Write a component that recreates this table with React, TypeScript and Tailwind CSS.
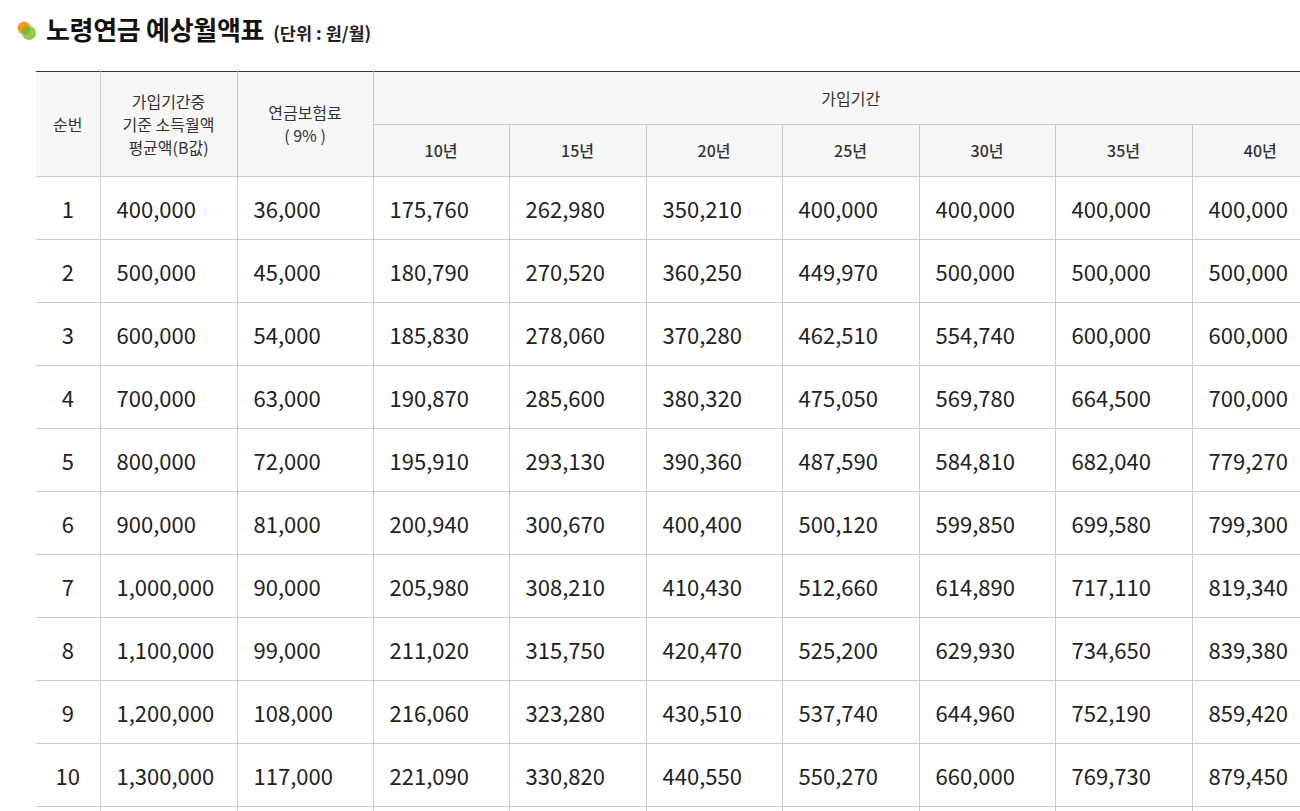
const years = ['10년', '15년', '20년', '25년', '30년', '35년', '40년'];

const rows: string[][] = [
  ['1', '400,000', '36,000', '175,760', '262,980', '350,210', '400,000', '400,000', '400,000', '400,000'],
  ['2', '500,000', '45,000', '180,790', '270,520', '360,250', '449,970', '500,000', '500,000', '500,000'],
  ['3', '600,000', '54,000', '185,830', '278,060', '370,280', '462,510', '554,740', '600,000', '600,000'],
  ['4', '700,000', '63,000', '190,870', '285,600', '380,320', '475,050', '569,780', '664,500', '700,000'],
  ['5', '800,000', '72,000', '195,910', '293,130', '390,360', '487,590', '584,810', '682,040', '779,270'],
  ['6', '900,000', '81,000', '200,940', '300,670', '400,400', '500,120', '599,850', '699,580', '799,300'],
  ['7', '1,000,000', '90,000', '205,980', '308,210', '410,430', '512,660', '614,890', '717,110', '819,340'],
  ['8', '1,100,000', '99,000', '211,020', '315,750', '420,470', '525,200', '629,930', '734,650', '839,380'],
  ['9', '1,200,000', '108,000', '216,060', '323,280', '430,510', '537,740', '644,960', '752,190', '859,420'],
  ['10', '1,300,000', '117,000', '221,090', '330,820', '440,550', '550,270', '660,000', '769,730', '879,450'],
];

const colWidths = ['w-[64px]', 'w-[137px]', 'w-[136px]', 'w-[136px]', 'w-[137px]', 'w-[136px]', 'w-[137px]', 'w-[136px]', 'w-[137px]', 'w-[136px]'];

function TitleIcon() {
  return (
    <svg width="22" height="22" viewBox="0 0 22 22" className="shrink-0">
      <circle cx="8" cy="8" r="6.5" fill="#f39c12" />
      <circle cx="13" cy="13" r="7" fill="#8cc63f" opacity="0.92" />
      <circle cx="10.2" cy="10.4" r="4" fill="#6aa82a" opacity="0.5" />
    </svg>
  );
}

export default function App() {
  return (
    <div
      className="h-[811px] w-[1300px] overflow-hidden bg-white text-[#222]"
      style={{ fontFamily: '"Noto Sans CJK KR", "Noto Sans", sans-serif' }}
    >
      <div className="flex h-[30px] items-center gap-[8px] pl-[16px] mt-[16px]">
        <TitleIcon />
        <h2 className="flex items-baseline gap-[9px] text-[26px] font-bold leading-[30px] tracking-[-0.3px] text-[#111]">
          노령연금 예상월액표
          <span className="text-[17.5px] font-bold tracking-normal text-[#222]">(단위 : 원/월)</span>
        </h2>
      </div>

      <div className="pl-[36px] pt-[25px]">
        <table className="w-[1292px] table-fixed border-collapse border-t border-t-[#333]">
          <colgroup>
            {colWidths.map((w, i) => (
              <col key={i} className={w} />
            ))}
          </colgroup>
          <thead>
            <tr className="h-[53px] bg-[#f7f7f7] text-[16px] leading-[23px] text-[#333]">
              <th rowSpan={2} className="border-b border-r border-[#ccc] font-normal">
                순번
              </th>
              <th rowSpan={2} className="border-b border-r border-[#ccc] font-normal">
                가입기간중
                <br />
                기준 소득월액
                <br />
                평균액(B값)
              </th>
              <th rowSpan={2} className="border-b border-r border-[#ccc] font-normal">
                연금보험료
                <br />( 9% )
              </th>
              <th colSpan={7} className="border-b border-[#ccc] font-normal">
                가입기간
              </th>
            </tr>
            <tr className="h-[52px] bg-[#f7f7f7] text-[16px] leading-[23px] text-[#333]">
              {years.map((y, i) => (
                <th key={y} className={`border-b border-[#ccc] font-medium ${i < years.length - 1 ? 'border-r' : ''}`}>
                  {y}
                </th>
              ))}
            </tr>
          </thead>
          <tbody>
            {rows.map((r) => (
              <tr key={r[0]} className="h-[63px] text-[22px]">
                {r.map((v, i) => (
                  <td
                    key={i}
                    className={`border-b border-[#ccc] ${i < r.length - 1 ? 'border-r' : ''} ${
                      i === 0 ? 'text-center' : 'pl-[16px] text-left'
                    }`}
                  >
                    {v}
                  </td>
                ))}
              </tr>
            ))}
            <tr className="h-[63px] text-[22px]">
              {colWidths.map((_, i) => (
                <td key={i} className={`${i < colWidths.length - 1 ? 'border-r' : ''} border-[#ccc]`} />
              ))}
            </tr>
          </tbody>
        </table>
      </div>
    </div>
  );
}
